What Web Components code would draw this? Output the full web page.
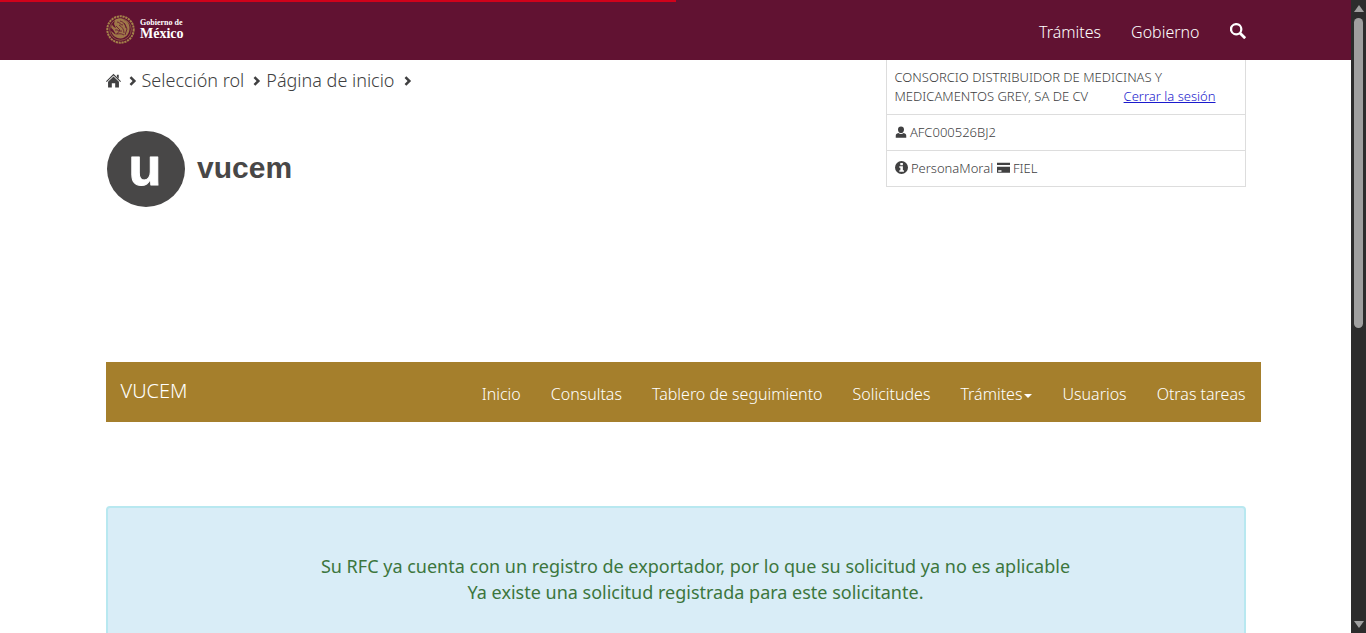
<!DOCTYPE html>
<html lang="es">
<head>
<meta charset="utf-8">
<title>VUCEM</title>
<style>
html, body { margin: 0; height: 100%; overflow: hidden; background: #fff; }
body { font: 300 18px/26px "Noto Sans", "Open Sans", sans-serif; color: #404041; }
</style>
</head>
<body>
<vucem-page></vucem-page>
<script>
const define = (name, css, html) => customElements.define(name, class extends HTMLElement {
  constructor() {
    super();
    const t = document.createElement('template');
    t.innerHTML = `<style>*{box-sizing:border-box}${css}</style>${html}`;
    this.attachShadow({ mode: 'open' }).append(t.content.cloneNode(true));
  }
});

const ICONS = {
  home: '<path d="M8 .8 0 8.700l.8.8L8 2.700l7.200 6.800.8-.8z"/><path d="M11.600 1.800h2v4.400l-2-2zM8 3.700 2.200 9.200V15.500h4V10.800h3.600v4.700h4V9.200z"/>',
  chevron: '<path d="M2.500 3.300 5.300.5 13 8 5.300 15.500 2.500 12.700 7.300 8z"/>',
  user: '<path d="M8 .5c2.600 0 4 1.700 4 4.200 0 1.900-.9 3.600-2 4.300-.6.500-3.400.5-4 0C4.900 8.300 4 6.600 4 4.700 4 2.200 5.400.5 8 .5zM4.500 9.300c2 1.700 5 1.700 7 0C14 9.800 15 11 15 13v2.500H1V13c0-2 1-3.200 3.500-3.700z"/>',
  info: '<path fill-rule="evenodd" d="M8 0a8 8 0 1 0 0 16A8 8 0 0 0 8 0zM6.500 2.500h3.200v2.700H6.500zM5.300 6.500h4.400v5h1.300v1.800H5.300v-1.800h1.300V8.300H5.300z"/>',
  card: '<path fill-rule="evenodd" d="M0 2h16v3H0zM0 7h16v7.500H0zM1.500 11.500v1.700h4v-1.700z"/>',
  search: '<path fill-rule="evenodd" d="M6.200 0a6.200 6.200 0 0 1 5.200 9.500l4.300 4.200c.3.400.3.700 0 1l-1 1c-.3.300-.7.300-1 0l-4.300-4.300A6.200 6.200 0 1 1 6.200 0zm0 2.200a4 4 0 1 0 0 8 4 4 0 0 0 0-8z"/>'
};
customElements.define('ui-icon', class extends HTMLElement {
  constructor() { super(); this.attachShadow({ mode: 'open' }); }
  connectedCallback() {
    this.shadowRoot.innerHTML = `<style>:host{display:inline-block;width:1em;height:1em;flex:none}svg{display:block;width:100%;height:100%;fill:currentColor}</style>
      <svg viewBox="0 0 16 16" aria-hidden="true">${ICONS[this.getAttribute('name')]}</svg>`;
  }
});

define('gob-logo', `:host{display:block}svg{display:block}text{fill:#fff;font-family:"Liberation Serif",serif;font-weight:700}`,
`<svg width="84" height="30" viewBox="0 0 84 30" role="img" aria-label="Gobierno de México">
  <g fill="none" stroke="#a5834a">
    <circle cx="14.500" cy="14.500" r="13.200" stroke-width="2" stroke-dasharray="2.200 .7"/>
    <circle cx="14.500" cy="14.500" r="10.800" stroke-width="1" opacity=".6"/>
  </g>
  <path fill="#a5834a" opacity=".9" d="M9 5c3-2 7-2 9 0 4 1 6 5 5.500 9-.3 5-3.500 9-9 9.500-5-.3-8.500-3.500-9.500-7.500 2 1 3 3 5 3.500l-3-5c-2-1-2.500-3-1-5 1 2 2 3 4 3.500L8 9z"/>
  <g fill="none" stroke="#611232" stroke-width=".8"><path d="M11 7c3 0 3 3 6 3M14 6c4 1 6 4 6 7M13 10c3 2 5 4 5 8M9 15c3-1 4 2 7 1M10 19c3 0 5-1 8 1M18 8l3 6-2 6M10 11l4 4-3 4"/></g>
  <text x="34" y="10" font-size="8">Gobierno de</text>
  <text x="34" y="23" font-size="14">México</text>
</svg>`);

define('gob-header', `
:host{display:block;position:relative;background:#611232;color:#fff;height:60px;font-size:16px;line-height:24px}
.progress{position:absolute;left:0;top:0;width:50%;height:2px;background:#d0021b}
.in{max-width:1140px;margin:0 auto;height:60px;display:flex;justify-content:space-between;align-items:center}
nav{display:flex;align-items:center;gap:30px;padding-top:4px}
a{color:inherit;text-decoration:none}
button{display:block;border:0;padding:0 0 2px;background:none;color:inherit;font-size:16px;line-height:0}`,
`<div class="progress"></div><div class="in"><a href="#"><gob-logo></gob-logo></a>
<nav><a href="#">Trámites</a><a href="#">Gobierno</a><button aria-label="Buscar"><ui-icon name="search"></ui-icon></button></nav></div>`);

define('bread-crumb', `
:host{display:flex;align-items:center;height:40px;gap:4px}
a{color:inherit;text-decoration:none}
.home{font-size:15px;line-height:0;margin-right:3px}
.sep{font-size:10px;height:12px;width:10px;margin-top:2px}
.sep + a{margin-right:4px}`,
`<a class="home" href="#" aria-label="Inicio"><ui-icon name="home"></ui-icon></a><ui-icon class="sep" name="chevron"></ui-icon><a href="#">Selección rol</a><ui-icon class="sep" name="chevron"></ui-icon><a href="#">Página de inicio</a><ui-icon class="sep" name="chevron"></ui-icon>`);

define('vucem-logo', `:host{display:block}svg{display:block}text{font-family:"Liberation Sans",sans-serif;font-weight:700;stroke-linejoin:round}`,
`<svg width="190" height="78" viewBox="0 0 190 78" role="img" aria-label="vucem">
<ellipse cx="40" cy="39" rx="39" ry="38" fill="#484747"/>
<text x="39" y="55" font-size="54" text-anchor="middle" fill="#fff" stroke="#fff" stroke-width="1">u</text>
<text x="91" y="48" font-size="30" fill="#484747">vucem</text></svg>`);

define('user-card', `
:host{display:block;width:360px;border:1px solid #ddd;border-top:0;font-size:13px;line-height:19px}
.row{padding:8px}
.row + .row{border-top:1px solid #ddd}
ui-icon{vertical-align:-1px;font-size:13px}
.user{font-size:12px}
.out{color:#1a1acd;margin-left:32px}`,
`<div class="row">CONSORCIO DISTRIBUIDOR DE MEDICINAS Y<br>MEDICAMENTOS GREY, SA DE CV <a class="out" href="#">Cerrar la sesión</a></div>
<div class="row"><ui-icon class="user" name="user"></ui-icon> AFC000526BJ2</div>
<div class="row"><ui-icon name="info"></ui-icon> PersonaMoral <ui-icon name="card"></ui-icon> FIEL</div>`);

define('main-nav', `
:host{display:flex;justify-content:space-between;align-items:center;height:60px;margin-right:-15px;padding:0 15px;background:#a57f2c;color:#fff;font-size:16px;line-height:24px}
.brand{font-size:20px;padding-bottom:2px}
nav{display:flex;gap:30px;padding-top:4px}
a{color:inherit;text-decoration:none}
.drop{display:flex;align-items:center;gap:2px}
.drop::after{content:"";border:4px solid transparent;border-top-color:#fff;border-bottom:0;margin-top:4px}`,
`<a class="brand" href="#">VUCEM</a><nav><a href="#">Inicio</a><a href="#">Consultas</a><a href="#">Tablero de seguimiento</a><a href="#">Solicitudes</a><a class="drop" href="#">Trámites</a><a href="#">Usuarios</a><a href="#">Otras tareas</a></nav>`);

define('alert-box', `
:host{display:block;border:2px solid #b8e8f0;border-radius:4px;background:#d9edf7;color:#3c763d;font-weight:400;text-align:center;padding:45px 0 62px 40px}`,
`<slot></slot>`);

define('scroll-bar', `
:host{display:flex;flex-direction:column;align-items:center;background:#2c2c2c;padding:5px 0}
i{border:5px solid transparent;border-top:0;border-bottom:7px solid #9f9f9f}
i:last-child{transform:rotate(180deg)}
.track{flex:1;margin:6px 0;width:9px}
.thumb{height:52%;border-radius:5px;background:#9f9f9f}`,
`<i></i><div class="track"><div class="thumb"></div></div><i></i>`);

define('vucem-page', `
:host{display:grid;grid-template-columns:minmax(0,1fr) 15px;height:100vh;overflow:hidden}
.view{overflow:hidden}
main{max-width:1140px;margin:0 auto}
.top{display:flex;justify-content:space-between;align-items:flex-start;min-height:302px}
vucem-logo{margin-top:30px}
alert-box{margin-top:84px}`,
`<div class="view"><gob-header></gob-header><main>
<div class="top"><div><bread-crumb></bread-crumb><vucem-logo></vucem-logo></div><user-card></user-card></div>
<main-nav></main-nav>
<alert-box>Su RFC ya cuenta con un registro de exportador, por lo que su solicitud ya no es aplicable<br>Ya existe una solicitud registrada para este solicitante.</alert-box>
</main></div><scroll-bar></scroll-bar>`);
</script>
</body>
</html>
